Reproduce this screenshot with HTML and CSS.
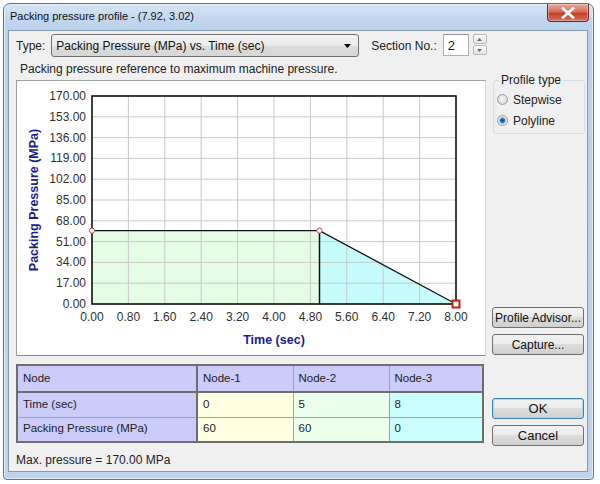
FILE: index.html
```html
<!DOCTYPE html>
<html>
<head>
<meta charset="utf-8">
<link rel="stylesheet" href="styles.css">
</head>
<body>
<div class="window">
  <div class="titlebar">
    <span class="title">Packing pressure profile - (7.92, 3.02)</span>
    <span class="close"><svg width="14" height="12" viewBox="0 0 14 12"><path d="M2 1.5 L12 10.5 M12 1.5 L2 10.5" stroke="#fff" stroke-width="2.6" stroke-linecap="square"/><path d="M2 1.5 L12 10.5 M12 1.5 L2 10.5" stroke="#fff" stroke-width="2" stroke-linecap="butt" opacity="0.9"/></svg></span>
  </div>
  <div class="client">
    <div class="leftcol">
      <div class="typerow">
        <span class="lbl">Type:</span>
        <div class="combo"><span>Packing Pressure (MPa) vs. Time (sec)</span><svg class="arrow" width="7" height="4" viewBox="0 0 7 4"><path d="M0 0 H7 L3.5 4 Z" fill="#000"/></svg></div>
        <span class="lbl sec">Section No.:</span>
        <div class="numbox">2</div>
        <div class="spin">
          <div class="spinbtn"><svg width="5" height="3" viewBox="0 0 5 3"><path d="M0 3 H5 L2.5 0 Z" fill="#6a6a6a"/></svg></div>
          <div class="spinbtn"><svg width="5" height="3" viewBox="0 0 5 3"><path d="M0 0 H5 L2.5 3 Z" fill="#6a6a6a"/></svg></div>
        </div>
      </div>
      <div class="note">Packing pressure reference to maximum machine pressure.</div>
      <div class="chart">
        <svg width="468" height="274" viewBox="0 0 468 274">
          <rect x="75" y="149.6" width="227.5" height="73.4" fill="#e4fde4"/>
          <polygon points="302.5,149.6 439,223 302.5,223" fill="#c6fcfc"/>
          <g stroke="#c9c9c9" stroke-width="1">
            <line x1="111.4" y1="15" x2="111.4" y2="223"/>
            <line x1="147.8" y1="15" x2="147.8" y2="223"/>
            <line x1="184.2" y1="15" x2="184.2" y2="223"/>
            <line x1="220.6" y1="15" x2="220.6" y2="223"/>
            <line x1="257" y1="15" x2="257" y2="223"/>
            <line x1="293.4" y1="15" x2="293.4" y2="223"/>
            <line x1="329.8" y1="15" x2="329.8" y2="223"/>
            <line x1="366.2" y1="15" x2="366.2" y2="223"/>
            <line x1="402.6" y1="15" x2="402.6" y2="223"/>
            <line x1="75" y1="35.8" x2="439" y2="35.8"/>
            <line x1="75" y1="56.6" x2="439" y2="56.6"/>
            <line x1="75" y1="77.4" x2="439" y2="77.4"/>
            <line x1="75" y1="98.2" x2="439" y2="98.2"/>
            <line x1="75" y1="119" x2="439" y2="119"/>
            <line x1="75" y1="139.8" x2="439" y2="139.8"/>
            <line x1="75" y1="160.6" x2="439" y2="160.6"/>
            <line x1="75" y1="181.4" x2="439" y2="181.4"/>
            <line x1="75" y1="202.2" x2="439" y2="202.2"/>
          </g>
          <rect x="75" y="15" width="364" height="208" fill="none" stroke="#000" stroke-width="1.5"/>
          <polyline points="75,149.6 302.5,149.6 439,223" fill="none" stroke="#111" stroke-width="1.3"/>
          <line x1="302.5" y1="149.6" x2="302.5" y2="223" stroke="#111" stroke-width="1.5"/>
          <circle cx="75" cy="149.6" r="2.6" fill="#fff" stroke="#c05050" stroke-width="1"/>
          <circle cx="302.5" cy="149.6" r="2.6" fill="#fff" stroke="#c05050" stroke-width="1"/>
          <rect x="435.5" y="219.5" width="7" height="7" fill="#fff" stroke="#d01818" stroke-width="2"/>
          <g class="ylab" text-anchor="end">
            <text x="69" y="19">170.00</text>
            <text x="69" y="39.8">153.00</text>
            <text x="69" y="60.6">136.00</text>
            <text x="69" y="81.4">119.00</text>
            <text x="69" y="102.2">102.00</text>
            <text x="69" y="123">85.00</text>
            <text x="69" y="143.8">68.00</text>
            <text x="69" y="164.6">51.00</text>
            <text x="69" y="185.4">34.00</text>
            <text x="69" y="206.2">17.00</text>
            <text x="69" y="227">0.00</text>
          </g>
          <g class="xlab" text-anchor="middle">
            <text x="75" y="240">0.00</text>
            <text x="111.4" y="240">0.80</text>
            <text x="147.8" y="240">1.60</text>
            <text x="184.2" y="240">2.40</text>
            <text x="220.6" y="240">3.20</text>
            <text x="257" y="240">4.00</text>
            <text x="293.4" y="240">4.80</text>
            <text x="329.8" y="240">5.60</text>
            <text x="366.2" y="240">6.40</text>
            <text x="402.6" y="240">7.20</text>
            <text x="439" y="240">8.00</text>
          </g>
          <text class="axtitle" x="257" y="263" text-anchor="middle">Time (sec)</text>
          <text class="axtitle" x="0" y="0" text-anchor="middle" transform="translate(20.5,119) rotate(-90)">Packing Pressure (MPa)</text>
        </svg>
      </div>
      <table class="grid">
        <tr class="hdr"><td class="c0">Node</td><td class="c1">Node-1</td><td class="c2">Node-2</td><td class="c3">Node-3</td></tr>
        <tr><td class="c0">Time (sec)</td><td class="c1 n1">0</td><td class="c2 n2">5</td><td class="c3 n3">8</td></tr>
        <tr><td class="c0">Packing Pressure (MPa)</td><td class="c1 n1">60</td><td class="c2 n2">60</td><td class="c3 n3">0</td></tr>
      </table>
      <div class="maxp">Max. pressure = 170.00 MPa</div>
    </div>
    <div class="rightcol">
      <fieldset class="group">
        <legend>Profile type</legend>
        <div class="radio"><span class="rb"></span>Stepwise</div>
        <div class="radio"><span class="rb on"></span>Polyline</div>
      </fieldset>
      <div class="btn advisor">Profile Advisor...</div>
      <div class="btn capture">Capture...</div>
      <div class="btn ok">OK</div>
      <div class="btn cancel">Cancel</div>
    </div>
  </div>
</div>
</body>
</html>
```

FILE: styles.css
```css
html, body {
  margin: 0;
  padding: 0;
  background: #ffffff;
}
body {
  font-family: "Liberation Sans", Arial, sans-serif;
  font-size: 12px;
  color: #1a1a1a;
}
.window {
  margin: 3px 0 0 3px;
  border: 1px solid #5b7190;
  border-radius: 7px 7px 4px 4px;
  background: linear-gradient(180deg, #d6e5f6 0px, #c3d8ef 14px, #b9d1ea 28px, #bed4ec 100%);
  padding: 0 5px 7px 4px;
  box-sizing: border-box;
  width: 591px;
  height: 477px;
  display: flex;
  flex-direction: column;
  box-shadow: inset 0 0 0 1px #e4eef9;
}
.titlebar {
  height: 26px;
  display: flex;
  align-items: flex-start;
  flex: none;
}
.title {
  padding: 6px 0 0 2px;
  font-size: 11px;
  color: #111;
}
.close {
  margin-left: auto;
  margin-right: -1px;
  width: 42px;
  height: 18px;
  border: 1px solid #6a2a20;
  border-top: none;
  border-radius: 0 0 4px 4px;
  background: linear-gradient(180deg, #e9a99a 0%, #d3705c 45%, #c3402a 55%, #d5725c 100%);
  display: flex;
  align-items: center;
  justify-content: center;
  box-sizing: border-box;
  box-shadow: inset 0 0 0 1px rgba(255,255,255,0.35);
}
.client {
  flex: 1;
  background: #f0f0f0;
  border: 1px solid #8399b6;
  display: flex;
  padding: 3px 0 0 7px;
  gap: 6px;
}
.leftcol {
  width: 470px;
  flex: none;
  display: flex;
  flex-direction: column;
}
.typerow {
  height: 23px;
  display: flex;
  align-items: center;
  white-space: nowrap;
}
.typerow > * {
  flex: none;
}
.lbl {
  color: #222;
}
.combo {
  margin-left: 6px;
  width: 308px;
  height: 23px;
  box-sizing: border-box;
  border: 1px solid #707070;
  border-radius: 3px;
  background: linear-gradient(180deg, #f3f3f3 0%, #ebebeb 50%, #dddddd 51%, #d6d6d6 100%);
  display: flex;
  align-items: center;
  padding: 0 7px 0 4px;
  font-size: 12px;
  color: #111;
}
.combo .arrow {
  margin-left: auto;
}
.sec {
  margin-left: 12px;
}
.numbox {
  margin-left: 6px;
  width: 26px;
  height: 22px;
  box-sizing: border-box;
  border: 1px solid #abadb3;
  border-top-color: #8f939b;
  background: #fff;
  padding: 3px 0 0 4px;
  font-size: 13px;
  align-self: flex-start;
}
.spin {
  margin-left: 4px;
  width: 14px;
  height: 21px;
  display: flex;
  flex-direction: column;
  gap: 1px;
  align-self: flex-start;
}
.spinbtn {
  flex: 1;
  border: 1px solid #b8b8b8;
  border-radius: 2px;
  background: linear-gradient(180deg, #f8f8f8, #e4e4e4);
  display: flex;
  align-items: center;
  justify-content: center;
}
.note {
  margin: 5px 0 0 4px;
  height: 15px;
  line-height: 15px;
  color: #222;
}
.chart {
  margin-top: 3px;
  width: 470px;
  height: 276px;
  box-sizing: border-box;
  border: 1px solid #a0a0a0;
  border-right-color: #d8d8d8;
  border-bottom-color: #8a8a8a;
  background: #fff;
}
.chart svg {
  display: block;
}
.ylab text, .xlab text {
  font-family: "Liberation Sans", Arial, sans-serif;
  font-size: 12px;
  fill: #303030;
}
.axtitle {
  font-family: "Liberation Sans", Arial, sans-serif;
  font-size: 12.5px;
  font-weight: bold;
  fill: #1c1c8c;
}
.grid {
  margin-top: 8px;
  width: 468px;
  border-collapse: collapse;
  border: 2px solid #6e6e6e;
  table-layout: fixed;
  font-size: 11.5px;
}
.grid td {
  height: 25px;
  padding: 0 0 2px 5px;
  border: 1px solid #a2a2a2;
  color: #222;
  box-sizing: border-box;
}
.grid .c0 { width: 180px; background: #ccccfb; }
.grid .c1 { width: 96px; }
.grid .c2 { width: 96px; }
.grid .hdr td { background: #ccccfb; border-bottom: 2px solid #6e6e6e; height: 27px; }
.grid td.c0 { border-right: 2px solid #6e6e6e; }
.grid .n1 { background: #ffffe2; }
.grid .n2 { background: #ebffeb; }
.grid .n3 { background: #cbffff; }
.maxp {
  margin-top: 10px;
  color: #222;
}
.rightcol {
  width: 93px;
  flex: none;
  display: flex;
  flex-direction: column;
  padding-top: 39px;
}
.group {
  margin: 0 0 0 1px;
  padding: 2px 0 6px 3px;
  border: 1px solid #d5dfe5;
  border-radius: 3px;
  width: 92px;
  height: 61px;
  box-sizing: border-box;
}
.group legend {
  padding: 0 2px;
  margin-left: 2px;
  color: #222;
}
.radio {
  display: flex;
  align-items: center;
  height: 21px;
  color: #222;
}
.rb {
  width: 11px;
  height: 11px;
  border-radius: 50%;
  border: 1px solid #9a9a9a;
  background: radial-gradient(circle at 50% 40%, #f6f6f6 0%, #e0e0e0 60%, #cfcfcf 100%);
  margin-right: 5px;
  box-sizing: border-box;
}
.rb.on {
  background: radial-gradient(circle at 50% 50%, #0a3b63 0%, #2a7bb8 30%, #7cc0ea 48%, #e8e8e8 55%, #f4f4f4 100%);
}
.btn {
  width: 92px;
  height: 21px;
  box-sizing: border-box;
  border: 1px solid #707070;
  border-radius: 3px;
  background: linear-gradient(180deg, #f2f2f2 0%, #ebebeb 49%, #dddddd 50%, #cfcfcf 100%);
  display: flex;
  align-items: center;
  justify-content: center;
  color: #111;
  font-size: 12px;
  white-space: nowrap;
}
.advisor { margin-top: 173px; }
.capture { margin-top: 6px; }
.ok {
  margin-top: 43px;
  border-color: #3c7fb1;
  box-shadow: inset 0 0 0 1px #a6dcf8;
  font-size: 13px;
}
.cancel { margin-top: 6px; font-size: 13px; }
```
